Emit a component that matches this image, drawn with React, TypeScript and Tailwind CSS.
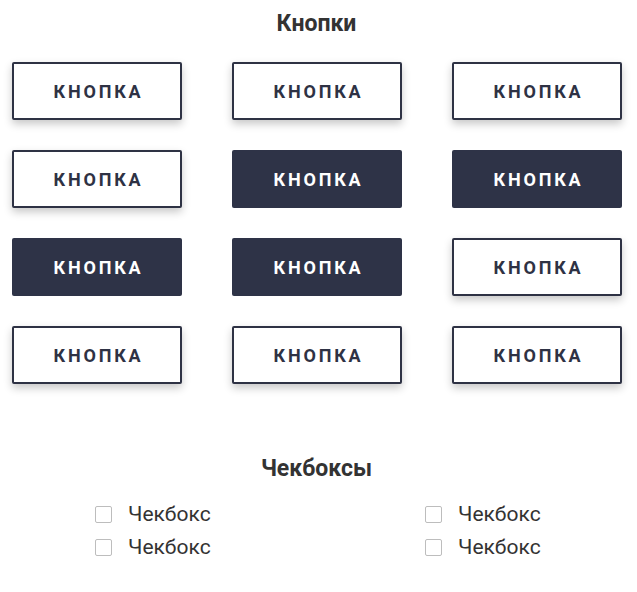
import React from "react";

const variants: ("o" | "d")[] = ["o", "o", "o", "o", "d", "d", "d", "d", "o", "o", "o", "o"];

function Btn({ v }: { v: "o" | "d" }) {
  if (v === "d") {
    return (
      <button className="w-[170px] h-[58px] rounded-[2px] bg-[#2e3347] text-white text-[18px] font-bold tracking-[2.8px] flex items-center justify-center pl-[3px] pt-[1px]">
        КНОПКА
      </button>
    );
  }
  return (
    <button className="w-[170px] h-[58px] rounded-[2px] border-2 border-[#2e3244] bg-white text-[#2e3244] text-[18px] font-bold tracking-[2.8px] flex items-center justify-center pl-[3px] pt-[1px] shadow-[0_4px_8px_rgba(0,0,0,0.22)]">
      КНОПКА
    </button>
  );
}

function Check() {
  return (
    <label className="flex items-center h-[33px]">
      <span className="w-[17px] h-[17px] border border-[#bdbdbd] rounded-[2px] bg-white" />
      <span className="ml-[16px] text-[21px] text-[#333]">Чекбокс</span>
    </label>
  );
}

export default function App() {
  return (
    <div className="w-[637px] h-[592px] bg-white" style={{ fontFamily: "Roboto, 'Liberation Sans', sans-serif" }}>
      <div className="w-[633px] pt-[10px]">
        <h2 className="text-center text-[23px] font-bold text-[#333] leading-[28px]">Кнопки</h2>
        <div className="mt-[24px] ml-[12px] grid grid-cols-[170px_170px_170px] gap-x-[50px] gap-y-[30px]">
          {variants.map((v, i) => (
            <Btn key={i} v={v} />
          ))}
        </div>
        <h2 className="mt-[71px] text-center text-[23px] font-bold text-[#333] leading-[28px]">Чекбоксы</h2>
        <div className="mt-[15px] ml-[95px] grid grid-cols-[330px_200px]">
          <Check />
          <Check />
          <Check />
          <Check />
        </div>
      </div>
    </div>
  );
}
